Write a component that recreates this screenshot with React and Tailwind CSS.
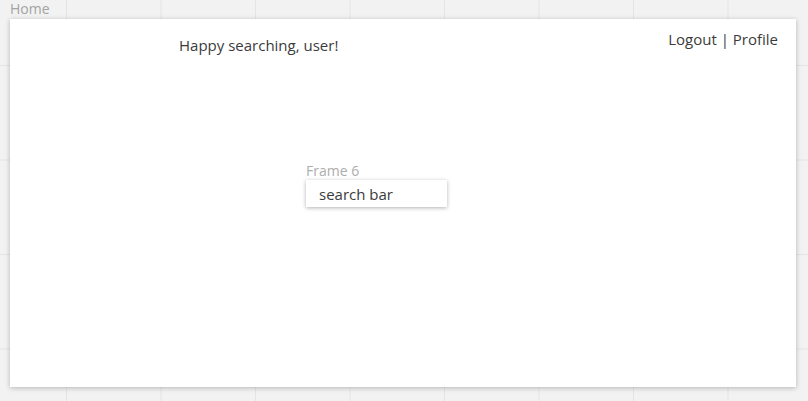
import React from "react";

export default function App() {
    return (
        <div
            className="w-[808px] h-[401px] overflow-hidden bg-[#f2f2f2] bg-[linear-gradient(to_right,#e4e4e4_1px,transparent_1px),linear-gradient(to_bottom,#e4e4e4_1px,transparent_1px)] bg-[size:94.5px_94.5px] bg-[position:66px_65px] pl-[10px]"
            style={{ fontFamily: '"Open Sans", "Liberation Sans", sans-serif' }}
        >
            <div className="h-[19px] text-[14px] leading-[17px] text-[#a3a3a3]">Home</div>
            <div className="w-[786px] h-[368px] bg-white shadow-[0_1px_5px_rgba(0,0,0,0.25)] flex flex-col">
                <div className="flex justify-between items-start">
                    <p className="ml-[169px] mt-[15px] text-[15px] leading-[22px] text-[#3b3b3b]">Happy searching, user!</p>
                    <p className="mr-[18px] mt-[9px] text-[15px] leading-[22px] text-[#3b3b3b]">Logout | Profile</p>
                </div>
                <div className="ml-[296px] mt-[106px] flex flex-col">
                    <span className="text-[14px] leading-[18px] text-[#adadad]">Frame 6</span>
                    <div className="w-[141px] h-[27px] bg-white shadow-[0_1px_4px_rgba(0,0,0,0.3)] pl-[13px] flex items-center">
                        <span className="text-[15px] text-[#3b3b3b] leading-[20px]">search bar</span>
                    </div>
                </div>
            </div>
        </div>
    );
}
